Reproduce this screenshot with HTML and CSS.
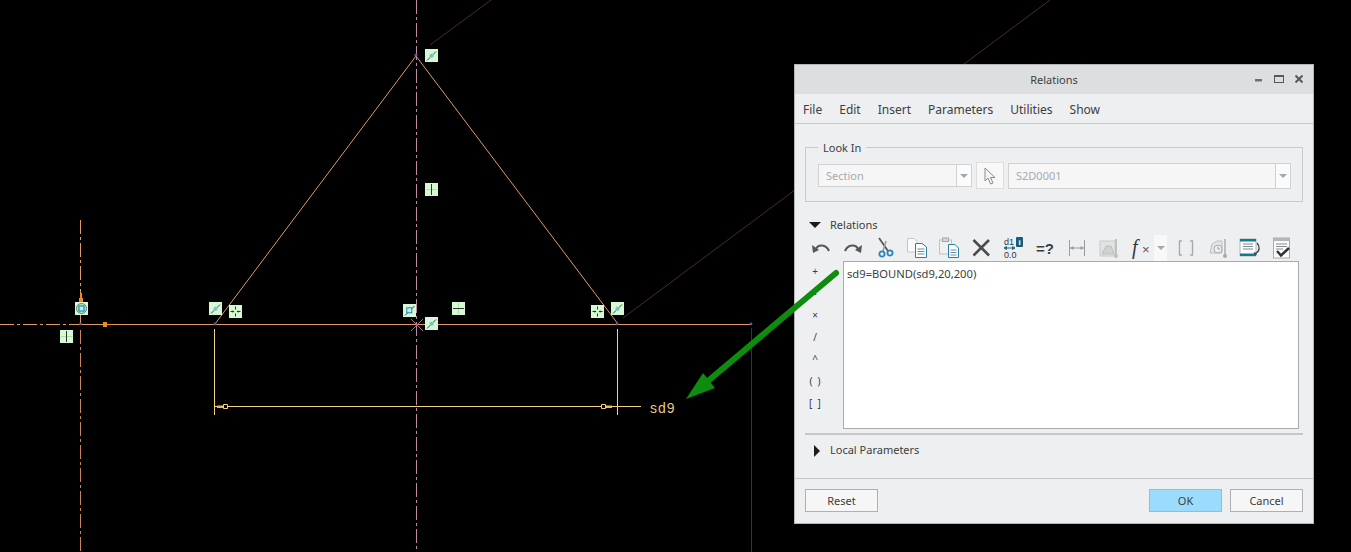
FILE: index.html
```html
<!DOCTYPE html>
<html lang="en">
<head>
    <meta charset="UTF-8">
    <title>Relations</title>
    <link rel="stylesheet" href="styles.css">
</head>
<body>
    <!-- sketch area -->
    <svg class="sketch" width="1351" height="552" viewBox="0 0 1351 552">
        <defs>
            <g id="tag-perp">
                <rect width="13" height="13" fill="#d6f8d2"/>
                <path d="M2 11.5 L11 2.5" stroke="#3a4c50" stroke-width="1"/>
                <circle cx="6.5" cy="6.8" r="2" fill="#6fbcd6" stroke="#a8d8e0" stroke-width="0.6"/>
            </g>
            <g id="tag-square">
                <rect width="13" height="13" fill="#d6f8d2"/>
                <path d="M2 11.5 L11.5 2" stroke="#3a4c50" stroke-width="1"/>
                <rect x="3.8" y="3.8" width="5" height="5" fill="#bfeef2" stroke="#1f86b4" stroke-width="1"/>
            </g>
            <g id="tag-vert">
                <rect width="13" height="13" fill="#d6f8d2"/>
                <path d="M1 6.5 H12" stroke="#b8d8b4" stroke-width="1"/>
                <path d="M6.5 1 V12" stroke="#2a3a2a" stroke-width="1"/>
            </g>
            <g id="tag-horiz">
                <rect width="13" height="13" fill="#d6f8d2"/>
                <path d="M6.5 1 V12" stroke="#b8d8b4" stroke-width="1"/>
                <path d="M1 6.5 H12" stroke="#2a3a2a" stroke-width="1"/>
            </g>
            <g id="tag-sym">
                <rect width="13" height="13" fill="#d6f8d2"/>
                <path d="M6.5 1.5 V4.5 M6.5 8.5 V11.5" stroke="#2a3a2a" stroke-width="1"/>
                <path d="M1.5 6.5 H4.5 M8.5 6.5 H11.5" stroke="#2a3a2a" stroke-width="1"/>
                <path d="M3.5 5.2 L5.5 6.5 L3.5 7.8 Z M9.5 5.2 L7.5 6.5 L9.5 7.8 Z" fill="#2a3a2a"/>
            </g>
            <g id="tag-origin">
                <rect width="13" height="13" fill="#d6f8d2"/>
                <circle cx="6.5" cy="6.5" r="5" fill="#c4dcc4" stroke="#5f8a6a" stroke-width="1"/>
                <rect x="4" y="4" width="5" height="5" fill="#bfeef2" stroke="#1398b8" stroke-width="1.2"/>
            </g>
        </defs>

        <!-- construction lines -->
        <path class="dark-line" d="M430 45 L491 0"/>
        <path class="dark-line" d="M623 318 L1050 0"/>
        <path class="dark-line" d="M751.5 328 V552"/>
        <path class="center-pink" d="M416.5 0 V552"/>
        <path class="center-orange" d="M80.5 220 V324"/>
        <path class="center-dim" d="M80.5 330 V552"/>
        <path class="center-orange" d="M0 324.5 H80"/>

        <!-- geometry -->
        <path class="geom" d="M80 324.5 H752"/>
        <path class="geom" d="M416 56 L215 324"/>
        <path class="geom" d="M416 56 L618 324"/>
        <path d="M411 319 L423 331 M423 319 L411 331" stroke="#a86a92" stroke-width="1"/>
        <circle cx="416" cy="55" r="1.6" fill="#5a5aa8"/>
        <circle cx="80.5" cy="324" r="1.4" fill="#5a5aa8"/>
        <circle cx="215" cy="324" r="1.4" fill="#5a5aa8"/>
        <circle cx="617" cy="324" r="1.4" fill="#5a5aa8"/>
        <circle cx="751" cy="324" r="1.4" fill="#5a5aa8"/>

        <!-- dimension -->
        <path class="dim" d="M214.5 329 V415 M617.5 329 V415 M215 406.5 H641"/>
        <path class="dim-fill" d="M217 405.5 H223 V408 H217 Z M606 405.5 H612 V408 H606 Z"/>
        <path class="dim-head" d="M223.5 404.5 H227.5 V408.5 H223.5 Z M601.5 404.5 H605.5 V408.5 H601.5 Z"/>
        <text class="dim-text" x="650" y="413">sd9</text>

        <!-- origin arrows -->
        <path d="M80 293 H82 V298 H83 V302 H79 V298 H80 Z" fill="#f08a18"/>
        <path d="M103 322 H107 V324 H113 V325 H107 V327 H103 Z" fill="#f08a18"/>

        <!-- constraint tags -->
        <use href="#tag-perp" x="425" y="49"/>
        <use href="#tag-vert" x="425" y="183"/>
        <use href="#tag-origin" x="75" y="302"/>
        <use href="#tag-vert" x="60" y="330"/>
        <use href="#tag-perp" x="209" y="302"/>
        <use href="#tag-sym" x="229" y="305"/>
        <use href="#tag-square" x="403" y="304"/>
        <use href="#tag-perp" x="425" y="317"/>
        <use href="#tag-horiz" x="452" y="302"/>
        <use href="#tag-sym" x="591" y="305"/>
        <use href="#tag-perp" x="611" y="302"/>
    </svg>

    <div class="dialog">
        <div class="title-bar">
            <span class="title">Relations</span>
            <div class="win-buttons">
                <svg class="win-min" width="7" height="8" viewBox="0 0 7 8"><rect y="4" width="7" height="2.5" fill="#6e7072"/></svg>
                <svg width="10" height="8" viewBox="0 0 10 8"><rect x="0.5" y="0.5" width="9" height="7" fill="none" stroke="#55585a"/><rect width="10" height="2" fill="#55585a"/></svg>
                <svg width="8" height="8" viewBox="0 0 8 8"><path d="M0.5 0.5 L7.5 7.5 M7.5 0.5 L0.5 7.5" stroke="#55585a" stroke-width="2"/></svg>
            </div>
        </div>

        <div class="menu-bar">
            <span>File</span>
            <span>Edit</span>
            <span>Insert</span>
            <span>Parameters</span>
            <span>Utilities</span>
            <span>Show</span>
        </div>

        <fieldset class="look-in">
            <legend>Look In</legend>
            <div class="look-row">
                <div class="combo combo-section"><span class="combo-text">Section</span><span class="combo-arrow"></span></div>
                <div class="picker">
                    <svg width="14" height="18" viewBox="0 0 14 18"><path d="M2 1 L2 14 L5 11 L7.5 17 L10 16 L7.5 10.5 L12 10.5 Z" fill="#f4f4f4" stroke="#8a8c8e"/></svg>
                </div>
                <div class="combo combo-id"><span class="combo-text">S2D0001</span><span class="combo-arrow"></span></div>
            </div>
        </fieldset>

        <div class="section-head">
            <span class="tri-down"></span>
            <span>Relations</span>
        </div>

        <div class="toolbar">
            <svg class="tool" viewBox="0 0 22 22"><path d="M6 12 C8 7 16 7 19 14" fill="none" stroke="#55585a" stroke-width="2"/><path d="M2 8 L9 13 L3 16 Z" fill="#55585a"/></svg>
            <svg class="tool" viewBox="0 0 22 22"><path d="M16 12 C14 7 6 7 3 14" fill="none" stroke="#55585a" stroke-width="2"/><path d="M20 8 L13 13 L19 16 Z" fill="#55585a"/></svg>
            <svg class="tool" viewBox="0 0 22 22"><path d="M5 1 L14 14" stroke="#55585a" stroke-width="1.8"/><path d="M12 4 L9 14" stroke="#9a9c9e" stroke-width="1.6"/><circle cx="8" cy="17" r="2.6" fill="none" stroke="#2a86b8" stroke-width="1.8"/><circle cx="16" cy="16" r="2.6" fill="none" stroke="#2a86b8" stroke-width="1.8"/></svg>
            <svg class="tool" viewBox="0 0 22 22"><path d="M1.5 1.5 H8 L11 4.5 V15 H1.5 Z" fill="#fbfbfb" stroke="#c4c6c8"/><path d="M9.5 6.5 H16 L20.5 10 V20.5 H9.5 Z" fill="#fff" stroke="#2a7fa8"/><path d="M11.5 12 H18.5 M11.5 14.5 H18.5 M11.5 17 H18.5" stroke="#6a8ea2"/></svg>
            <svg class="tool" viewBox="0 0 22 22"><rect x="1.5" y="3" width="12" height="14" fill="#f0f0f0" stroke="#c0c2c4"/><rect x="4.5" y="1" width="6" height="3.5" fill="#d4d6d8" stroke="#a4a6a8"/><path d="M10.5 7.5 H17 L20.5 11 V20.5 H10.5 Z" fill="#fff" stroke="#2a7fa8"/><path d="M12.5 13 H18.5 M12.5 15.5 H18.5 M12.5 18 H18.5" stroke="#6a8ea2"/></svg>
            <svg class="tool" viewBox="0 0 22 22"><path d="M3.5 3 L19 18.5 M19 3 L3.5 18.5" stroke="#4a4c4e" stroke-width="2.6"/></svg>
            <svg class="tool" viewBox="0 0 22 22"><text class="tool-text" x="2" y="8">d1</text><path d="M2 11 H13 M2 11 L4.5 9.5 V12.5 Z M13 11 L10.5 9.5 V12.5 Z" stroke="#1b6f8a" fill="#1b6f8a" stroke-width="1"/><text class="tool-text" x="2" y="21">0.0</text><rect x="14" y="0" width="7" height="10" rx="1" fill="#13607e"/><text class="tool-i" x="17.5" y="8">i</text></svg>
            <svg class="tool" viewBox="0 0 22 22"><text class="tool-eq" x="11" y="17">=?</text></svg>
            <svg class="tool" viewBox="0 0 22 22"><path d="M3.5 3 V19 M18.5 3 V19 M4 11 H18" stroke="#9a9c9e" stroke-width="1"/><path d="M4 11 L7.5 9 V13 Z M18 11 L14.5 9 V13 Z" fill="#9a9c9e"/></svg>
            <svg class="tool" viewBox="0 0 22 22"><rect x="2" y="4" width="15" height="15" fill="#e2e4e4" stroke="#c8caca"/><path d="M4 17 L8 9 H13 L16 17 Z" fill="#d0d2d2" stroke="#bcbebe"/><path d="M18 2 V18" stroke="#c0c2c2" stroke-width="2"/><circle cx="18" cy="19" r="2" fill="#bcbebe"/></svg>
            <svg class="tool" viewBox="0 0 22 22"><text class="tool-f" x="2" y="17">f</text><text class="tool-x" x="12" y="17">×</text></svg>
            <div class="tool-drop"><span class="combo-arrow-mark"></span></div>
            <svg class="tool" viewBox="0 0 22 22"><path d="M7 4 H4.5 V18 H7 M15 4 H17.5 V18 H15" fill="none" stroke="#a8aaac" stroke-width="1.4"/></svg>
            <svg class="tool" viewBox="0 0 22 22"><path d="M3 16 L5 7 L10 4 H15 V16 Z" fill="#e4e6e6" stroke="#bcbebe"/><circle cx="11" cy="12" r="4" fill="#f0f0f0" stroke="#a8aaaa"/><path d="M11 9.5 V12 H13" stroke="#9a9c9c" fill="none"/><path d="M18 2 V18" stroke="#bcbebe" stroke-width="2"/><circle cx="18" cy="19" r="2" fill="#a8aaaa"/></svg>
            <svg class="tool" viewBox="0 0 22 22"><rect x="1" y="2" width="16" height="17" fill="#fdfdfd" stroke="#b4b6b8"/><rect x="1" y="2" width="16" height="2.5" fill="#117b96"/><rect x="1" y="16.5" width="16" height="2.5" fill="#117b96"/><path d="M4 7 H14 M4 9.5 H14 M4 12 H14" stroke="#7d8c94"/><path d="M18 6 C21 9 21 14 17 16 M15 15.5 L17.5 17.5" fill="none" stroke="#33383c" stroke-width="1.2"/></svg>
            <svg class="tool" viewBox="0 0 22 22"><rect x="2.5" y="1" width="16" height="20" fill="#fbfbfb" stroke="#a8aaac"/><rect x="2.5" y="1" width="16" height="3" fill="#b4b6b8"/><path d="M5 7 H16 M5 9.5 H16 M5 12 H12" stroke="#8a8c8e"/><path d="M6 14 L10 18.5 L18 11" fill="none" stroke="#2c3236" stroke-width="2.4"/></svg>
        </div>

        <div class="editor-row">
            <div class="operators">
                <span>+</span>
                <span>-</span>
                <span>×</span>
                <span>/</span>
                <span>^</span>
                <span>(  )</span>
                <span>[  ]</span>
            </div>
            <textarea class="editor" spellcheck="false">sd9=BOUND(sd9,20,200)</textarea>
        </div>

        <div class="sep"></div>

        <div class="local-head">
            <span class="tri-right"></span>
            <span>Local Parameters</span>
        </div>

        <div class="footer">
            <button class="btn btn-reset">Reset</button>
            <button class="btn btn-ok">OK</button>
            <button class="btn">Cancel</button>
        </div>
    </div>

    <!-- green callout arrow on top of everything -->
    <svg class="callout" width="1351" height="552" viewBox="0 0 1351 552">
        <path d="M836 273 L708 381" stroke="#0e8c0e" stroke-width="6" stroke-linecap="round"/>
        <path d="M686 399 L703 373 L715 388 Z" fill="#0e8c0e"/>
    </svg>
</body>
</html>
```

FILE: styles.css
```css
body {
    margin: 0;
    height: 552px;
    overflow: hidden;
    background-color: #000000;
    font-family: "Noto Sans", "Open Sans", sans-serif;
    font-size: 11px;
    color: #3c3e40;
}
.sketch {
    display: block;
}
.dark-line {
    stroke: #4a2c2c;
    stroke-width: 1;
    fill: none;
}
.center-pink {
    stroke: #c08aa0;
    stroke-width: 1;
    stroke-dasharray: 14 3 3 3;
    fill: none;
}
.center-orange {
    stroke: #e09a5c;
    stroke-width: 1;
    stroke-dasharray: 14 3 3 3;
    fill: none;
}
.center-dim {
    stroke: #c8845c;
    stroke-width: 1;
    stroke-dasharray: 14 3 3 3;
    fill: none;
}
.geom {
    stroke: #e0986a;
    stroke-width: 1;
    fill: none;
}
.dim {
    stroke: #f5cf82;
    stroke-width: 1;
    fill: none;
}
.dim-fill {
    fill: #f5b848;
}
.dim-head {
    fill: #000000;
    stroke: #f5cf82;
    stroke-width: 1;
}
.dim-text {
    font-family: "Liberation Sans", sans-serif;
    font-size: 14px;
    letter-spacing: 1px;
    fill: #e8c88a;
}
.callout {
    position: absolute;
    left: 0;
    top: 0;
    pointer-events: none;
}

/* dialog window */
.dialog {
    position: absolute;
    left: 794px;
    top: 64px;
    width: 520px;
    height: 460px;
    box-sizing: border-box;
    border: 1px solid #b4b6b8;
    background-color: #eeeff1;
    display: flex;
    flex-direction: column;
}
.title-bar {
    height: 29px;
    flex: none;
    background-color: #dcdee0;
    display: flex;
    align-items: center;
    justify-content: center;
    position: relative;
}
.win-buttons {
    position: absolute;
    right: 10px;
    top: 10px;
    display: flex;
    align-items: center;
    gap: 11px;
}
.win-buttons svg {
    display: block;
}
.win-min {
    margin-right: 1px;
}
.menu-bar {
    height: 30px;
    box-sizing: border-box;
    flex: none;
    padding: 1px 0 0 8px;
    display: flex;
    align-items: center;
    gap: 17px;
    border-bottom: 1px solid #c6c8ca;
    font-size: 12px;
}
.look-in {
    margin: 15px 10px 0;
    padding: 7px 11px 12px 12px;
    border: 1px solid #c8cacc;
    min-width: 0;
}
.look-in legend {
    padding: 1px 5px 0;
    line-height: 15px;
}
.look-row {
    display: flex;
    align-items: center;
    gap: 4px;
    height: 27px;
}
.combo {
    display: flex;
    box-sizing: border-box;
    border: 1px solid #d0d2d4;
    background-color: #f6f6f7;
    color: #a8aaac;
}
.combo-section {
    width: 154px;
    height: 23px;
}
.combo-id {
    flex: 1;
    height: 26px;
}
.combo-text {
    flex: 1;
    padding-left: 7px;
    line-height: 21px;
}
.combo-id .combo-text {
    line-height: 24px;
}
.combo-arrow {
    width: 14px;
    border-left: 1px solid #d0d2d4;
    background-color: #fbfbfc;
    position: relative;
}
.combo-arrow::after,
.combo-arrow-mark {
    content: "";
    display: block;
    width: 0;
    height: 0;
    border-left: 4px solid transparent;
    border-right: 4px solid transparent;
    border-top: 4px solid #a4a6a8;
}
.combo-arrow::after {
    position: absolute;
    left: 3px;
    top: 50%;
    margin-top: -2px;
}
.picker {
    width: 28px;
    height: 27px;
    box-sizing: border-box;
    border: 1px solid #dcdee0;
    background-color: #f8f8f9;
    display: flex;
    align-items: center;
    justify-content: center;
}
.section-head {
    margin-top: 14px;
    padding-left: 14px;
    height: 16px;
    flex: none;
    display: flex;
    align-items: center;
    gap: 9px;
}
.tri-down {
    width: 0;
    height: 0;
    margin-top: 2px;
    border-left: 6px solid transparent;
    border-right: 6px solid transparent;
    border-top: 6px solid #1c1c1c;
}
.toolbar {
    margin-top: 5px;
    padding-left: 15px;
    height: 22px;
    flex: none;
    display: flex;
    align-items: center;
    gap: 10px;
}
.tool {
    width: 22px;
    height: 22px;
    flex: none;
}
.tool-text {
    font-family: "Liberation Sans", sans-serif;
    font-size: 9px;
    fill: #33383c;
}
.tool-i {
    font-family: "Liberation Sans", sans-serif;
    font-size: 8px;
    font-weight: bold;
    text-anchor: middle;
    fill: #ffffff;
}
.tool-eq {
    font-family: "Liberation Sans", sans-serif;
    font-size: 15px;
    font-weight: bold;
    text-anchor: middle;
    fill: #3c3e40;
}
.tool-f {
    font-family: "Liberation Serif", serif;
    font-size: 20px;
    font-style: italic;
    fill: #33383c;
}
.tool-x {
    font-family: "Liberation Sans", sans-serif;
    font-size: 13px;
    fill: #55585a;
}
.tool-drop {
    width: 13px;
    height: 27px;
    flex: none;
    margin-left: -8px;
    margin-right: -2px;
    background-color: #f8f8f9;
    display: flex;
    align-items: center;
    justify-content: center;
}
.editor-row {
    flex: none;
    height: 170px;
    display: flex;
}
.operators {
    width: 48px;
    flex: none;
    padding: 1px 8px 0 0;
    box-sizing: border-box;
    display: flex;
    flex-direction: column;
    align-items: center;
}
.operators span {
    height: 22px;
    line-height: 22px;
    font-size: 10px;
    white-space: pre;
    color: #3c3e40;
}
.editor {
    display: block;
    width: 456px;
    height: 168px;
    margin: 2px 0 0;
    padding: 4px 3px;
    box-sizing: border-box;
    border: 1px solid #a8aaac;
    border-radius: 0;
    outline: none;
    resize: none;
    background-color: #ffffff;
    font-family: "Noto Sans", "Open Sans", sans-serif;
    font-size: 11.2px;
    line-height: 16px;
    color: #3c3e40;
}
.sep {
    height: 2px;
    flex: none;
    margin: 4px 10px 0;
    background-color: #c4c6c8;
}
.local-head {
    margin-top: 6px;
    padding-left: 19px;
    height: 16px;
    flex: none;
    display: flex;
    align-items: center;
    gap: 10px;
}
.tri-right {
    width: 0;
    height: 0;
    margin-top: 3px;
    border-top: 6px solid transparent;
    border-bottom: 6px solid transparent;
    border-left: 6px solid #1c1c1c;
}
.footer {
    margin-top: auto;
    border-top: 1px solid #c6c8ca;
    padding: 10px 10px 11px;
    display: flex;
    gap: 8px;
}
.btn {
    width: 73px;
    height: 23px;
    padding: 0;
    box-sizing: border-box;
    border: 1px solid #aeb0b2;
    border-radius: 0;
    background-color: #f6f6f7;
    font-family: "Noto Sans", "Open Sans", sans-serif;
    font-size: 11px;
    color: #3c3e40;
}
.btn-reset {
    margin-right: auto;
}
.btn-ok {
    background-color: #9bdcfd;
    border-color: #7cc4e8;
}
```
